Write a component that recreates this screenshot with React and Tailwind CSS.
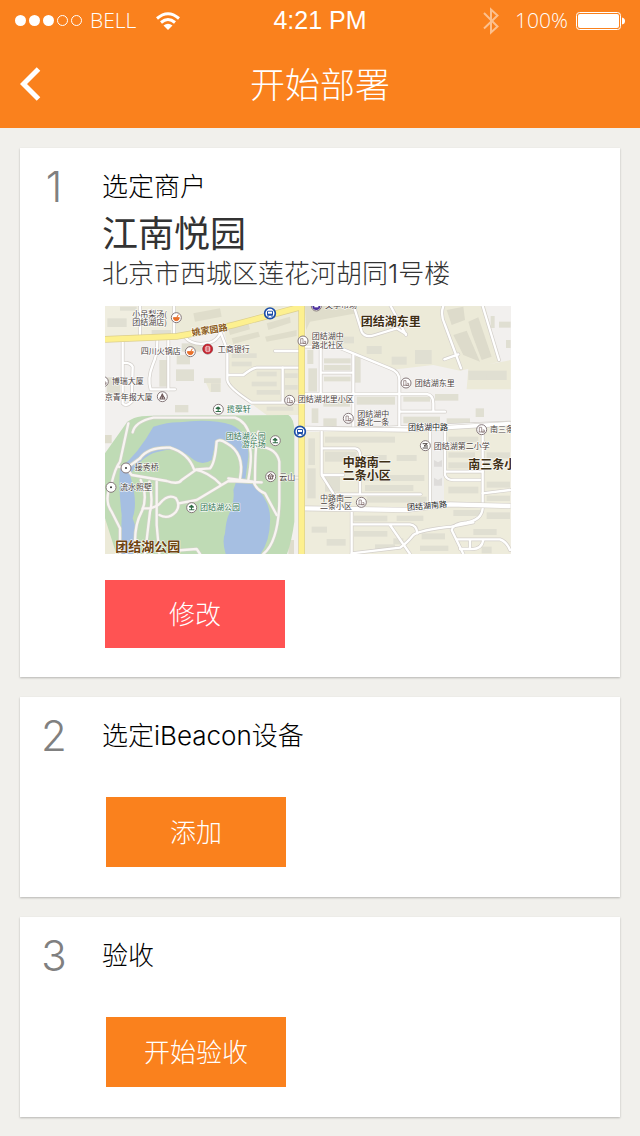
import React from "react";

// Map is drawn on a 1218 x 744 canvas, in four tiles
const roads = {
  nw: [
    "M68 122 V310 Q78 322 95 305 L98 200 Q92 188 70 188",
    "M120 18 V105", "M222 18 V105",
    "M172 122 Q172 165 158 195 Q142 235 152 268 H225", "M205 122 V268",
    "M255 112 Q280 140 330 128 Q350 122 362 98 L382 150 V240 Q384 262 455 308 H595",
    "M385 225 H430 Q455 205 470 203 H600", "M548 203 V305", "M525 153 H600",
  ],
  ne: [
    "M165 30 L185 95 Q195 115 225 105 L290 85 L318 102 M272 18 L318 105",
    "M430 18 Q420 45 435 75 L483 205 M433 178 L475 163",
    "M548 18 L597 180",
    "M15 140 H110 L270 205 Q298 215 298 240 V390",
    "M62 145 V280 M65 218 H155 M160 165 V385",
    "M15 282 H380 Q400 285 400 310 V332 M300 335 H435",
    "M15 385 H210 L630 368",
  ],
  sw: [
    "M85 -5 L60 110 Q45 130 35 175 Q10 225 35 260 L60 310 V387",
    "M55 125 L80 130 L95 150 L200 168 Q235 180 245 165 L290 133 L330 130 Q345 115 350 50 Q360 40 380 55 Q435 85 420 160",
    "M120 100 Q145 65 210 68 Q265 85 282 133 M282 133 Q325 140 362 178",
    "M122 165 Q145 215 125 260 Q98 310 108 387", "M148 170 Q160 225 150 260 L135 387",
    "M170 170 V300 L178 387", "M128 250 H150 Q170 245 180 235 Q205 205 228 220 Q242 240 228 260 Q205 285 178 270",
    "M236 235 L290 225 L385 168 L485 172 M385 160 L460 170 Q470 195 495 205 L530 270",
    "M445 55 Q460 80 445 165 M475 20 Q465 60 465 165",
    "M480 65 Q530 70 538 110 V230 Q535 350 490 387", "M555 158 H600",
    "M78 130 L120 100 M98 22 Q105 -10 160 -22 H405 Q440 -10 450 35",
    "M210 378 L290 372 L300 387",
  ],
  se: [
    "M65 15 V150 L100 205 M65 70 H165 Q180 72 180 90 V205 M65 150 H130",
    "M110 208 H362", "M390 20 V240", "M435 20 V150 Q440 165 460 165 H540",
    "M548 20 V250 Q545 285 500 292 Q460 295 455 315 L490 387",
    "M155 255 V387 M155 298 H330 Q350 300 352 325 M270 300 L330 387",
    "M155 385 L300 368 Q320 355 340 330 Q360 315 455 305 L520 292",
    "M470 343 H600 Q620 350 630 375 M510 345 V372 H480 M510 372 Q545 375 550 345",
    "M435 140 H548 M548 205 L630 195",
  ],
};

const buildings = {
  nw: [
    [22, 55, 58, 26], [155, 90, 58, 22], [245, 130, 60, 25], [228, 208, 54, 35], [230, 165, 40, 28],
    [20, 232, 40, 60], [178, 180, 24, 80], [312, 235, 50, 14], [333, 250, 28, 26], [225, 315, 40, 22],
    [395, 160, 75, 14], [395, 185, 60, 14], [470, 215, 60, 14], [455, 245, 75, 14], [470, 270, 70, 14],
    [500, 320, 80, 12], [555, 220, 38, 14], [555, 255, 38, 14], [60, 20, 50, 12],
  ],
  ne: [
    [22, 150, 18, 42], [25, 205, 26, 70], [72, 175, 80, 15], [72, 195, 80, 16], [100, 110, 62, 20],
    [200, 138, 45, 24], [275, 170, 45, 24], [345, 150, 50, 42], [165, 170, 17, 78], [72, 230, 80, 14],
    [170, 290, 115, 24], [310, 290, 80, 15], [505, 212, 115, 28], [405, 282, 70, 20], [310, 350, 110, 20],
    [440, 355, 70, 18], [527, 325, 25, 26], [35, 325, 20, 44], [70, 355, 40, 25], [597, 65, 35, 18],
    [618, 120, 14, 24], [70, 300, 80, 20], [560, 220, 12, 18], [572, 48, 12, 36],
  ],
  se: [
    [75, 35, 210, 18], [75, 80, 95, 30], [25, 40, 20, 80], [22, 130, 25, 90], [75, 150, 45, 50],
    [190, 90, 70, 24], [195, 150, 178, 18], [195, 180, 145, 18], [290, 90, 60, 18], [200, 215, 180, 18],
    [445, 35, 90, 16], [445, 82, 80, 16], [445, 112, 90, 18], [445, 185, 90, 20], [560, 82, 70, 18],
    [560, 170, 70, 18], [560, 212, 70, 16], [35, 305, 46, 18], [80, 342, 57, 20], [162, 272, 100, 17],
    [162, 318, 100, 17], [290, 272, 80, 16], [365, 325, 70, 18], [360, 362, 85, 16], [520, 312, 70, 18],
    [280, 340, 30, 18], [225, 358, 60, 16], [460, 255, 80, 18], [560, 262, 70, 20], [545, 365, 30, 20],
  ],
};

const Roads = ({ list, edge = "#d3cfca", fill = "#fff" }) => (
  <g fill="none" strokeLinejoin="round" strokeLinecap="round">
    <g stroke={edge} strokeWidth="11">{list.map((d) => <path key={d} d={d} />)}</g>
    <g stroke={fill} strokeWidth="7">{list.map((d) => <path key={d} d={d} />)}</g>
  </g>
);

const Buildings = ({ list, fill = "#e0dfd2" }) => (
  <g fill={fill}>
    {list.map(([x, y, w, h]) => <rect key={`${x}-${y}`} x={x} y={y} width={w} height={h} />)}
  </g>
);

const Label = ({ x, y, size = 24, fill = "#4b4240", bold, rotate, children }) => (
  <text
    x={x}
    y={y}
    fontSize={size}
    fill={fill}
    fontWeight={bold ? 700 : 400}
    stroke="#fff"
    strokeWidth="4"
    strokeOpacity="0.85"
    strokeLinejoin="round"
    paintOrder="stroke"
    transform={rotate ? `rotate(${rotate} ${x} ${y})` : undefined}
  >
    {children}
  </text>
);

const Pin = ({ x, y, type = "building" }) => (
  <g transform={`translate(${x} ${y})`}>
    {type === "bus" ? (
      <g>
        <circle r="16" fill="#fff" stroke="#1d4fa8" strokeWidth="5" />
        <rect x="-9" y="-8" width="18" height="15" rx="3" fill="#1d4fa8" />
        <rect x="-6" y="-5" width="12" height="6" fill="#fff" />
        <path d="M-6 7 V10 M6 7 V10" stroke="#1d4fa8" strokeWidth="4" />
      </g>
    ) : (
      <circle r="15" fill="#fff" stroke="#85787a" strokeWidth="3" />
    )}
    {type === "building" && <path d="M-7 7 V-7 H0 V7 H8 V1 H3 M-9 7 H9" fill="none" stroke="#7a6464" strokeWidth="2" />}
    {type === "tower" && <path d="M-9 7 H9 M-6 7 V1 H6 V7 M-4 1 L0 -9 L4 1 M0 -7 V7" fill="none" stroke="#6b5555" strokeWidth="3" />}
    {type === "temple" && <path d="M-9 -2 L0 -9 L9 -2 Z M-6 -2 V7 H6 V-2 M0 0 V7" fill="none" stroke="#6b5555" strokeWidth="3" />}
    {type === "food" && <path d="M-9 0 H9 Q8 9 0 9 Q-8 9 -9 0 Z M1 0 L6 -9" fill="#e8702a" stroke="#e8702a" strokeWidth="3" />}
    {type === "tree" && <path d="M-8 -1 Q-9 -6 -4 -6 Q-1 -11 3 -6 Q8 -5 6 0 H1 V5 H8 V8 H-8 V5 H-2 V0 Z" fill="#2f6b45" />}
    {type === "dot" && <circle r="3" fill="#333" />}
    {type === "school" && <path d="M-8 -6 H6 L-4 1 H8 M-8 7 H8" fill="none" stroke="#4b4240" strokeWidth="3" />}
    {type === "bank" && (
      <g>
        <circle r="15" fill="#c5212d" />
        <path d="M-5 -8 H5 V8 H-5 Z M-9 -3 H9 M-9 3 H9" fill="none" stroke="#fff" strokeWidth="2" />
      </g>
    )}
    {type === "shop" && (
      <g>
        <circle r="12" fill="#4b2f9c" />
        <rect x="-6" y="-5" width="12" height="9" fill="#fff" />
      </g>
    )}
  </g>
);

const StoreMap = () => (
  <svg
    viewBox="0 0 1218 744"
    role="img"
    aria-label="地图"
    className="block w-full max-w-[406px] font-['Noto_Sans_CJK_SC',sans-serif]"
  >
    <rect width="1218" height="744" fill="#f2f0ee" />

    {/* North west */}
    <g transform="translate(-15 -18)">
      <path d="M0 0 H600 V22 L400 75 L230 108 L0 117 Z" fill="#f0eee0" />
      <path d="M370 80 L600 20 V345 H500 L385 260 V150 Z M312 235 H362 V276 H330 Z" fill="#ecead8" />
      <path d="M225 18 H560 L400 65 L225 100 Z" fill="#ecead8" />
      <Buildings list={buildings.nw} />
      <path d="M280 40 L360 25 L365 50 L285 65 Z M385 85 L445 70 L450 88 L390 105 Z M395 115 L475 95 L480 110 L400 132 Z M500 70 L570 50 L572 68 L505 90 Z M495 110 L590 90 V108 L500 125 Z" fill="#dfddcb" />
      <Roads list={roads.nw} />
    </g>

    {/* North east */}
    <g transform="translate(585 -18)">
      <path d="M15 0 H550 L600 185 L480 212 L400 195 L290 208 L130 150 L18 130 Z M505 205 L632 180 V268 H500 Z" fill="#ecead8" />
      <path d="M15 18 H170 V40 L30 65 L18 90 Z" fill="#dfddcb" />
      <Buildings list={buildings.ne} />
      <path d="M440 30 L490 20 L495 60 L455 75 Z M505 65 L535 52 L575 170 L545 180 L515 100 Z M460 105 L500 92 L540 185 L490 165 Z" fill="#dddbcb" />
      <Roads list={roads.ne} />
    </g>

    {/* South east */}
    <g transform="translate(585 357)">
      <path d="M15 22 L210 15 L632 0 V390 H15 Z" fill="#eeecdc" />
      <path d="M395 18 H432 V235 H395 Z" fill="#efeeec" />
      <path d="M402 105 L414 112 L426 105 V125 H402 Z M402 158 L414 165 L426 158 V182 H402 Z" fill="#dedcda" />
      <Buildings list={buildings.se} />
      <Roads list={roads.se} />
      <path d="M15 250 L320 255 L450 238 L632 243" fill="none" stroke="#d3cfca" strokeWidth="17" />
      <path d="M15 250 L320 255 L450 238 L632 243" fill="none" stroke="#fff" strokeWidth="13" />
      <path d="M15 10 L320 15 L632 -4" fill="none" stroke="#d3cfca" strokeWidth="15" />
      <path d="M15 10 L320 15 L632 -4" fill="none" stroke="#fff" strokeWidth="11" />
    </g>

    {/* Park and lakes */}
    <g transform="translate(-15 357)">
      <path d="M0 285 H45 V390 H0 Z" fill="#ecead8" />
      <path d="M565 345 H582 V387 H565 Z M15 30 H35 V55 H15 Z" fill="#dedccc" />
      <path d="M15 85 L75 0 Q90 -28 155 -28 L565 -30 Q583 -20 583 20 V290 Q575 350 560 390 H50 L15 280 Z" fill="#bfdbb5" />
      <path d="M160 5 Q210 -10 240 -8 Q330 -20 395 0 Q450 25 445 95 L435 170 H415 L425 120 Q405 75 370 45 L345 60 L335 105 Q305 125 275 100 Q235 65 185 78 Q130 85 90 150 Q115 230 98 280 L108 310 L98 390 H62 L65 270 Q55 190 60 130 Q115 85 160 5 Z" fill="#a6bfe2" />
      <path d="M408 172 L460 178 Q515 230 510 290 Q510 345 480 390 H378 Q365 350 375 325 Q378 285 388 265 Q405 225 400 195 Z" fill="#a6bfe2" />
      <Roads list={roads.sw} edge="#cfd3c6" fill="#f8f4f2" />
    </g>

    {/* Main roads */}
    <g fill="none">
      <path d="M0 100 L215 91 Q300 78 385 57 L590 2 M590 -10 V754" stroke="#dccf8e" strokeWidth="20" />
      <path d="M0 100 L215 91 Q300 78 385 57 L590 2 M590 -10 V754" stroke="#fdf08f" strokeWidth="16" />
    </g>

    <g transform="translate(-15 -18)">
      <Label x={97} y={50}>
        小吊梨汤(
        <tspan x={97} dy={25}>团结湖店)</tspan>
      </Label>
      <Pin x={229} y={53} type="food" />
      <Label x={277} y={108} size={27} fill="#8a5a1c" bold rotate={-9}>姚家园路</Label>
      <Pin x={510} y={40} type="bus" />
      <Label x={122} y={163}>四川火锅店</Label>
      <Pin x={271} y={155} type="food" />
      <Pin x={323} y={147} type="bank" />
      <Label x={353} y={157}>工商银行</Label>
      <Pin x={10} y={245} />
      <Label x={35} y={252}>博瑞大厦</Label>
      <Label x={14} y={299}>京青年报大厦</Label>
      <Pin x={187} y={290} type="tower" />
      <Pin x={355} y={328} type="tree" />
      <Label x={380} y={335} fill="#2f7350">揽翠轩</Label>
      <Pin x={569} y={301} />
      <Pin x={609} y={123} />
    </g>

    <g transform="translate(585 -18)">
      <Pin x={49} y={18} type="shop" />
      <Label x={75} y={25}>文学市场</Label>
      <Label x={182} y={79} size={36} fill="#3f2f14" bold>团结湖东里</Label>
      <Label x={35} y={118}>
        团结湖中
        <tspan x={35} dy={25}>路北社区</tspan>
      </Label>
      <Pin x={318} y={249} />
      <Label x={344} y={257}>团结湖东里</Label>
      <Label x={-7} y={307}>团结湖北里小区</Label>
      <Pin x={145} y={355} />
      <Label x={172} y={350}>
        团结湖中
        <tspan x={172} dy={25}>路北一条</tspan>
      </Label>
      <Label x={324} y={390} fill="#222">团结湖中路</Label>
      <Pin x={545} y={389} />
      <Label x={570} y={396}>南三条</Label>
    </g>

    <g transform="translate(-15 357)">
      <Label x={377} y={41} fill="#2f7350">
        团结湖公园
        <tspan x={425} dy={25}>游乐场</tspan>
      </Label>
      <Pin x={526} y={47} type="tree" />
      <Pin x={600} y={20} type="bus" />
      <Pin x={78} y={129} type="dot" />
      <Label x={104} y={136}>接秀桥</Label>
      <Pin x={33} y={187} type="dot" />
      <Label x={60} y={196}>流水照壁</Label>
      <Pin x={512} y={155} type="temple" />
      <Label x={538} y={164}>云山</Label>
      <Pin x={275} y={248} type="tree" />
      <Label x={300} y={256} fill="#2f7350">团结湖公园</Label>
      <Label x={46} y={379} size={39} fill="#6f4310" bold>团结湖公园</Label>
    </g>

    <g transform="translate(585 357)">
      <Label x={128} y={127} size={36} fill="#3f2f14" bold>
        中路南一
        <tspan x={128} dy={37}>二条小区</tspan>
      </Label>
      <Pin x={376} y={62} type="school" />
      <Label x={401} y={71}>团结湖第二小学</Label>
      <Label x={505} y={133} size={36} fill="#3f2f14" bold>南三条小区</Label>
      <Label x={60} y={227}>
        中路南一
        <tspan x={60} dy={25}>二条小区</tspan>
      </Label>
      <Pin x={184} y={232} />
      <Label x={322} y={256} fill="#222" rotate={-5}>团结湖南路</Label>
    </g>
  </svg>
);

const StatusBar = () => (
  <div className="flex h-10 items-center justify-between px-[15px] pt-px font-['Open_Sans',sans-serif] text-[21px] font-[350] text-white">
    <div className="flex flex-1 items-center">
      <div className="flex gap-[3px]">
        <span className="size-[11px] rounded-full bg-white" />
        <span className="size-[11px] rounded-full bg-white" />
        <span className="size-[11px] rounded-full bg-white" />
        <span className="size-[11px] rounded-full border border-white" />
        <span className="size-[11px] rounded-full border border-white" />
      </div>
      <span className="ml-2">BELL</span>
      <svg viewBox="0 0 24 18" className="ml-5 h-[18px] w-6" fill="none" stroke="#fff" strokeWidth="3">
        <path d="M1 6.5 Q12 -3 23 6.5" />
        <path d="M5 10.5 Q12 4.5 19 10.5" />
        <path d="M7.5 13.5 Q12 10 16.5 13.5 L12 18 Z" fill="#fff" stroke="none" />
      </svg>
    </div>
    <span className="font-['Liberation_Sans',sans-serif] text-[25px] font-normal">4:21 PM</span>
    <div className="flex flex-1 items-center justify-end">
      <svg viewBox="0 0 16 28" className="h-7 w-4 opacity-50" fill="none" stroke="#fff" strokeWidth="2">
        <path d="M1 6 L14.5 19.5 L8 25.5 V2.5 L14.5 8.5 L1 21.5" />
      </svg>
      <span className="ml-4">100%</span>
      <svg viewBox="0 0 49 20" className="ml-2 h-5 w-[49px]">
        <rect x="0.5" y="1.5" width="44" height="17" rx="3" fill="none" stroke="#fff" />
        <rect x="2" y="3" width="41" height="14" rx="2" fill="#fff" />
        <path d="M46 6.5 Q49 7 49 10 Q49 13 46 13.5 Z" fill="#fff" />
      </svg>
    </div>
  </div>
);

const Header = () => (
  <header className="bg-[#fa811d]">
    <StatusBar />
    <div className="grid h-[88px] grid-cols-[60px_1fr_60px] items-center">
      <button type="button" aria-label="返回" className="flex h-full items-center pl-5">
        <svg viewBox="0 0 21 34" className="h-[34px] w-[21px]" fill="none" stroke="#fff" strokeWidth="5">
          <path d="M18.5 2 L3.5 17 L18.5 32" />
        </svg>
      </button>
      <h1 className="pt-0.5 text-center text-[35px] leading-[48px] font-light text-white">开始部署</h1>
    </div>
  </header>
);

const Step = ({ number, title, children }) => (
  <section className="grid grid-cols-[60px_1fr] bg-white px-[22px] pt-6 shadow-[0_1px_2px_rgba(0,0,0,0.25)]">
    <span className="flex h-[30px] w-6 items-center justify-center text-[42px] leading-[30px] font-light text-[#808080]">{number}</span>
    <div className="min-w-0">
      <h2 className="text-[26px] leading-[30px] font-light text-black">{title}</h2>
      {children}
    </div>
  </section>
);

const App = () => {
  return (
    <div className="min-h-screen bg-[#f1f0ec] font-['Inter','Noto_Sans_CJK_SC',sans-serif]">
      <Header />
      <main className="flex flex-col gap-5 p-5">
        <Step number="1" title="选定商户">
          <p className="mt-2 text-[36px] leading-[48px] text-[#333]">江南悦园</p>
          <p className="text-[26px] leading-8 font-light text-[#333]">北京市西城区莲花河胡同1号楼</p>
          <div className="mt-4 ml-[3px]">
            <StoreMap />
          </div>
          <button type="button" className="mt-[26px] mb-[29px] ml-[3px] block h-[68px] w-[180px] bg-[#ff5353] text-[26px] font-light text-white">
            修改
          </button>
        </Step>

        <Step number="2" title="选定iBeacon设备">
          <button type="button" className="mt-[46px] mb-[30px] ml-1 block h-[70px] w-[180px] bg-[#fa811d] text-[26px] font-light text-white">
            添加
          </button>
        </Step>

        <Step number="3" title="验收">
          <button type="button" className="mt-[46px] mb-[30px] ml-1 block h-[70px] w-[180px] bg-[#fa811d] text-[26px] font-light text-white">
            开始验收
          </button>
        </Step>
      </main>
    </div>
  );
};

export default App;
